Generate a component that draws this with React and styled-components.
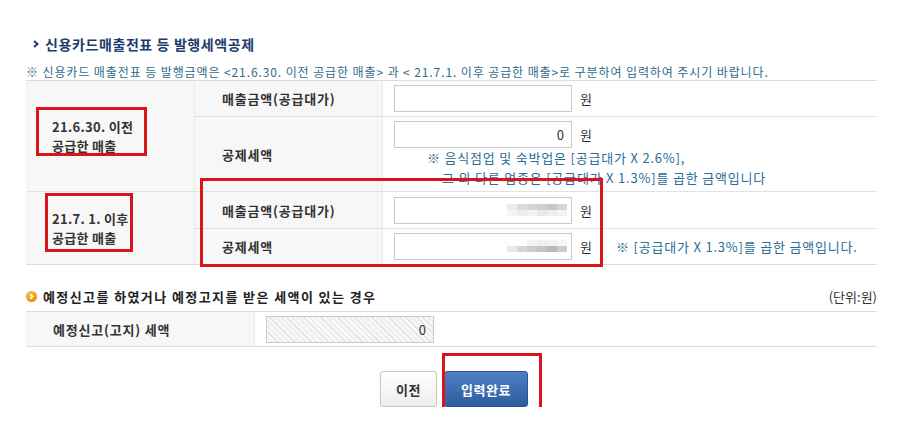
import React from "react";
import styled, { createGlobalStyle } from "styled-components";

const GlobalStyle = createGlobalStyle`
  body {
    margin: 0;
    background: #fff;
    font-family: "Noto Sans CJK KR", "Noto Sans", sans-serif;
    color: #333;
  }
`;

const Page = styled.div`
  position: relative;
  width: 851px;
  padding: 34px 0 0 26px;
`;

const SectionTitle = styled.h2`
  display: flex;
  align-items: center;
  gap: 6px;
  height: 20px;
  margin: 0;
  padding-left: 7px;
  font-size: 14px;
  font-weight: 700;
  color: #1c3c6c;
  letter-spacing: 0.6px;
`;

const Notice = styled.p`
  margin: 10px 0 0;
  font-size: 12px;
  line-height: 16px;
  color: #2e6a8e;
  letter-spacing: 0.9px;
  white-space: nowrap;
`;

const Table = styled.div`
  border-top: 1px solid #dcdcdc;
  border-bottom: 1px solid #dcdcdc;
`;

const Group = styled.div`
  display: grid;
  grid-template-columns: 169px 1fr;
  & + & {
    border-top: 1px solid #e2e2e2;
  }
`;

const GroupLabel = styled.div`
  display: flex;
  align-items: center;
  padding-left: 26px;
  background: #f7f7f7;
  border-right: 1px solid #ececec;
  font-size: 13px;
  font-weight: 700;
  line-height: 19px;
  letter-spacing: 0.3px;
  color: #333;
`;

const SubRow = styled.div`
  display: grid;
  grid-template-columns: 188px 1fr;
  height: ${({ $h }) => $h}px;
  box-sizing: border-box;
  & + & {
    border-top: 1px solid #e2e2e2;
  }
`;

const SubLabel = styled.div`
  display: flex;
  align-items: center;
  padding-left: 27px;
  background: #f7f7f7;
  border-right: 1px solid #ececec;
  font-size: 13px;
  font-weight: 700;
  letter-spacing: 0.8px;
  color: #333;
`;

const ValueCell = styled.div`
  display: flex;
  flex-direction: ${({ $stack }) => ($stack ? "column" : "row")};
  align-items: ${({ $stack }) => ($stack ? "flex-start" : "center")};
  padding: ${({ $stack }) => ($stack ? "4px 0 0 11px" : "0 0 0 11px")};
  background: #fff;
`;

const InputLine = styled.div`
  display: flex;
  align-items: center;
  gap: 8px;
`;

const InputBox = styled.div`
  position: relative;
  box-sizing: border-box;
  width: ${({ $w }) => $w || 178}px;
  height: 27px;
  border: 1px solid #c9c9c9;
  background: ${({ $hatched }) =>
    $hatched
      ? "repeating-linear-gradient(45deg, #f7f7f7 0 3px, #e2e2e2 3px 4px)"
      : "#fff"};
  display: flex;
  align-items: center;
  justify-content: flex-end;
  padding-right: 7px;
  font-size: 13px;
  color: #333;
`;

const Unit = styled.span`
  font-size: 13px;
  color: #333;
`;

const Hint = styled.div`
  font-size: 13px;
  line-height: 20px;
  letter-spacing: 0.8px;
  color: #2a6d96;
  white-space: nowrap;
  padding-left: ${({ $indent }) => $indent || 0}px;
`;

const InlineHint = styled(Hint)`
  margin-left: 24px;
`;

const Mosaic = styled.div`
  position: absolute;
  right: 4px;
  top: ${({ $top }) => $top}px;
  display: grid;
  grid-template-columns: repeat(6, 10px);
  grid-auto-rows: 6px;
`;

const Pixel = styled.span`
  background: ${({ $c }) => $c};
`;

const SubHeading = styled.div`
  display: flex;
  align-items: center;
  justify-content: space-between;
  height: 20px;
  margin-top: 21px;
  margin-bottom: 5px;
`;

const SubHeadingTitle = styled.h3`
  display: flex;
  align-items: center;
  gap: 6px;
  margin: 0;
  font-size: 13px;
  font-weight: 700;
  color: #222;
  letter-spacing: 1.4px;
`;

const UnitNote = styled.span`
  font-size: 13px;
  color: #333;
`;

const SimpleRow = styled.div`
  display: grid;
  grid-template-columns: 229px 1fr;
  height: 34px;
`;

const Buttons = styled.div`
  display: flex;
  justify-content: center;
  gap: 7px;
  margin-top: 24px;
  padding-left: 5px;
`;

const Button = styled.button`
  height: 36px;
  padding: 0;
  width: ${({ $w }) => $w}px;
  border-radius: 3px;
  font-family: inherit;
  font-size: 13px;
  font-weight: 700;
  letter-spacing: 0.6px;
  cursor: pointer;
  border: 1px solid ${({ $primary }) => ($primary ? "#2c5592" : "#c6c6c6")};
  color: ${({ $primary }) => ($primary ? "#fff" : "#333")};
  background: ${({ $primary }) =>
    $primary
      ? "linear-gradient(#4c7fc4, #2f5d9d)"
      : "linear-gradient(#ffffff, #eeeeee)"};
  box-shadow: 0 1px 1px rgba(0, 0, 0, 0.12);
`;

const Mark = styled.div`
  position: absolute;
  left: ${({ $x }) => $x}px;
  top: ${({ $y }) => $y}px;
  width: ${({ $w }) => $w}px;
  height: ${({ $h }) => $h}px;
  box-sizing: border-box;
  border: 3px solid #d9141b;
  pointer-events: none;
`;

const Chevron = () => (
  <svg width="6" height="8" viewBox="0 0 6 8">
    <path d="M1 1 L4.5 4 L1 7" fill="none" stroke="#1c3c6c" strokeWidth="2" />
  </svg>
);

const OrangeDot = () => (
  <svg width="11" height="11" viewBox="0 0 11 11">
    <defs>
      <radialGradient id="og" cx="40%" cy="35%" r="70%">
        <stop offset="0%" stopColor="#ffc24a" />
        <stop offset="100%" stopColor="#e98a00" />
      </radialGradient>
    </defs>
    <circle cx="5.5" cy="5.5" r="5.5" fill="url(#og)" />
    <path d="M4.3 3.3 L6.5 5.5 L4.3 7.7" fill="none" stroke="#fff" strokeWidth="1.6" />
  </svg>
);

const blurA = [
  "#ececec", "#dcdcdc", "#d4d4d4", "#cfcfcf", "#c8c8c8", "#d6d6d6",
  "#f4f4f4", "#eeeeee", "#f2f2f2", "#e8e8e8", "#eeeeee", "#f4f4f4",
];
const blurB = [
  "#fff", "#fff", "#f4f4f4", "#f0f0f0", "#f2f2f2", "#f6f6f6",
  "#ece8e0", "#d6d6d6", "#cccccc", "#c4c4c4", "#b8b8b8", "#cccccc",
];

const Blur = ({ colors, top }) => (
  <Mosaic $top={top}>
    {colors.map((c, i) => (
      <Pixel key={i} $c={c} />
    ))}
  </Mosaic>
);

export default function App() {
  return (
    <>
      <GlobalStyle />
      <Page>
        <SectionTitle>
          <Chevron />
          신용카드매출전표 등 발행세액공제
        </SectionTitle>
        <Notice>
          ※ 신용카드 매출전표 등 발행금액은 &lt;21.6.30. 이전 공급한 매출&gt; 과 &lt; 21.7.1. 이후 공급한 매출&gt;로 구분하여 입력하여 주시기 바랍니다.
        </Notice>

        <Table>
          <Group>
            <GroupLabel>
              21.6.30. 이전
              <br />
              공급한 매출
            </GroupLabel>
            <div>
              <SubRow $h={35}>
                <SubLabel>매출금액(공급대가)</SubLabel>
                <ValueCell>
                  <InputLine>
                    <InputBox />
                    <Unit>원</Unit>
                  </InputLine>
                </ValueCell>
              </SubRow>
              <SubRow $h={75}>
                <SubLabel>공제세액</SubLabel>
                <ValueCell $stack>
                  <InputLine>
                    <InputBox>0</InputBox>
                    <Unit>원</Unit>
                  </InputLine>
                  <Hint $indent={33}>※ 음식점업 및 숙박업은 [공급대가 X 2.6%],</Hint>
                  <Hint $indent={48}>그 외 다른 업종은 [공급대가 X 1.3%]를 곱한 금액입니다</Hint>
                </ValueCell>
              </SubRow>
            </div>
          </Group>
          <Group>
            <GroupLabel>
              21.7. 1. 이후
              <br />
              공급한 매출
            </GroupLabel>
            <div>
              <SubRow $h={36}>
                <SubLabel>매출금액(공급대가)</SubLabel>
                <ValueCell>
                  <InputLine>
                    <InputBox>
                      <Blur colors={blurA} top={6} />
                    </InputBox>
                    <Unit>원</Unit>
                  </InputLine>
                </ValueCell>
              </SubRow>
              <SubRow $h={36}>
                <SubLabel>공제세액</SubLabel>
                <ValueCell>
                  <InputLine>
                    <InputBox>
                      <Blur colors={blurB} top={6} />
                    </InputBox>
                    <Unit>원</Unit>
                  </InputLine>
                  <InlineHint>※ [공급대가 X 1.3%]를 곱한 금액입니다.</InlineHint>
                </ValueCell>
              </SubRow>
            </div>
          </Group>
        </Table>

        <SubHeading>
          <SubHeadingTitle>
            <OrangeDot />
            예정신고를 하였거나 예정고지를 받은 세액이 있는 경우
          </SubHeadingTitle>
          <UnitNote>(단위:원)</UnitNote>
        </SubHeading>
        <Table>
          <SimpleRow>
            <SubLabel>예정신고(고지) 세액</SubLabel>
            <ValueCell>
              <InputBox $w={168} $hatched>
                0
              </InputBox>
            </ValueCell>
          </SimpleRow>
        </Table>

        <Buttons>
          <Button $w={57}>이전</Button>
          <Button $w={84} $primary>
            입력완료
          </Button>
        </Buttons>

        <Mark $x={36} $y={107} $w={111} $h={49} />
        <Mark $x={45} $y={193} $w={88} $h={59} />
        <Mark $x={200} $y={178} $w={403} $h={89} />
        <Mark $x={442} $y={353} $w={100} $h={59} />
      </Page>
    </>
  );
}
